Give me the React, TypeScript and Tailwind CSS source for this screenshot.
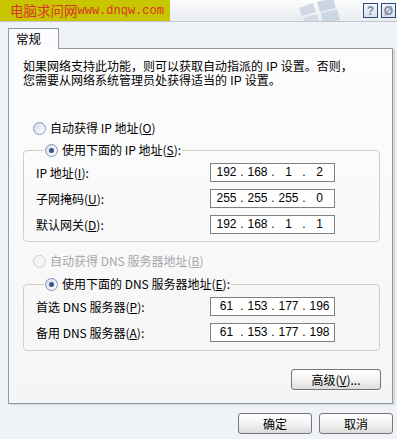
import React from 'react';

const cjk = "font-['Noto_Sans_CJK_SC','Noto_Sans',sans-serif]";

const Radio: React.FC<{ checked?: boolean; disabled?: boolean }> = ({ checked = false, disabled = false }) => (
    <span
        className={
            'inline-flex h-[13px] w-[13px] shrink-0 items-center justify-center rounded-full border ' +
            (disabled
                ? 'border-[#c9ced6] bg-[#f4f5f7]'
                : 'border-[#7d97b8] bg-gradient-to-br from-[#d4dce8] to-[#ffffff]')
        }
    >
        {checked && <span className="h-[5px] w-[5px] rounded-full bg-[#34557f]" />}
    </span>
);

const IpBox: React.FC<{ parts: string[] }> = ({ parts }) => (
    <div className="flex h-[19px] w-[125px] items-center border border-[#7f7f7f] bg-white pl-[2px] font-['Liberation_Sans',sans-serif] text-[12px] text-black">
        {parts.map((p, i) => (
            <React.Fragment key={i}>
                <span className="w-[27px] text-center leading-[17px]">{p}</span>
                {i < 3 && <span className="w-[4px] text-center leading-[17px]">.</span>}
            </React.Fragment>
        ))}
    </div>
);

const Row: React.FC<{ label: React.ReactNode; parts: string[] }> = ({ label, parts }) => (
    <div className="flex h-[19px] items-center">
        <div className="w-[174px] whitespace-nowrap">{label}</div>
        <IpBox parts={parts} />
    </div>
);

const Button: React.FC<{ className?: string; children: React.ReactNode }> = ({ className = '', children }) => (
    <button
        className={
            'flex items-center justify-center rounded-[3px] border border-[#767676] bg-gradient-to-b from-[#ffffff] via-[#f3f3f3] to-[#dcdcdc] text-[12px] text-black ' +
            className
        }
    >
        {children}
    </button>
);

export default function App() {
    return (
        <div className={`flex h-[439px] w-[397px] flex-col overflow-hidden bg-[#eff2f7] text-[12px] text-black ${cjk}`}>
            {/* title bar */}
            <div className="flex h-[22px] shrink-0 border-b border-[#c3c7cc] bg-gradient-to-b from-[#fbfcfd] to-[#e9ecf0]">
                <div className="flex h-[21px] w-[170px] items-center bg-[#c8c600] pl-[10px] text-[#d8352a]">
                    <span className="text-[13.5px] leading-none">电脑求问网</span>
                    <span className="font-['Liberation_Mono',monospace] text-[12px] leading-none">www.dnqw.com</span>
                </div>
                <div className="flex flex-1 items-start justify-end">
                    <svg width="50" height="21" viewBox="0 0 50 21" className="mr-[18px] opacity-35">
                        <path d="M4 8 L18 3 L21 12 L7 16 Z" fill="#8ea5c2" />
                        <path d="M22 2 L38 -2 L41 8 L25 12 Z" fill="#7d96b6" />
                        <path d="M8 18 L22 14 L24 22 L10 24 Z" fill="#a7b8cf" />
                        <path d="M26 13 L42 9 L45 20 L28 23 Z" fill="#91a8c5" />
                    </svg>
                    <div className="mt-[3px] flex gap-[3px] pr-[1px]">
                        <div className="flex h-[15px] w-[15px] items-center justify-center border border-[#2f4c78] bg-gradient-to-b from-[#f4f7fb] to-[#d7e0ec] font-['Liberation_Sans',sans-serif] text-[12px] font-bold leading-none text-[#7d8da4]">
                            ?
                        </div>
                        <div className="flex h-[15px] w-[15px] items-center justify-center border border-[#2f4c78] bg-gradient-to-b from-[#f4f7fb] to-[#d7e0ec] font-['Liberation_Sans',sans-serif] text-[12px] font-bold leading-none text-[#7d8da4]">
                            Ø
                        </div>
                    </div>
                </div>
            </div>

            {/* tab + panel */}
            <div className="flex flex-col pl-[8px] pr-[4px] pt-[6px]">
                <div className="flex">
                    <div className="relative z-10 -mb-px flex h-[21px] w-[51px] items-center border border-b-0 border-[#919b9c] bg-[#fcfcfe] pl-[7px] text-[12.5px]">
                        常规
                    </div>
                </div>
                <div className="flex h-[356px] flex-col border border-[#919b9c] bg-gradient-to-b from-[#fdfdfe] to-[#f5f5f5] pl-[14px] pr-[12px] pt-[11px] shadow-[2px_1px_0_#d3d6da]">
                    <div className="flex flex-col font-['Liberation_Sans','Noto_Sans_CJK_SC',sans-serif]">
                        <span className="h-[14px] whitespace-nowrap leading-[14px]">
                            如果网络支持此功能，则可以获取自动指派的 IP 设置。否则，
                        </span>
                        <span className="h-[14px] whitespace-nowrap leading-[14px]">
                            您需要从网络系统管理员处获得适当的 IP 设置。
                        </span>
                    </div>

                    <div className="mt-[32px] flex h-[16px] items-center gap-[4px] pl-[10px]">
                        <Radio />
                        <span>
                            自动获得 IP 地址(<u>O</u>)
                        </span>
                    </div>

                    <fieldset className="mt-[6px] rounded-[4px] border border-[#d0d0bf] pb-[7px] pl-[12px]">
                        <legend className="ml-[8px] flex h-[16px] items-center gap-[4px] px-[1px]">
                            <Radio checked />
                            <span>
                                使用下面的 IP 地址(<u>S</u>):
                            </span>
                        </legend>
                        <div className="flex flex-col gap-[7px] pt-[5px]">
                            <Row label={<>IP 地址(<u>I</u>):</>} parts={['192', '168', '1', '2']} />
                            <Row label={<>子网掩码(<u>U</u>):</>} parts={['255', '255', '255', '0']} />
                            <Row label={<>默认网关(<u>D</u>):</>} parts={['192', '168', '1', '1']} />
                        </div>
                    </fieldset>

                    <div className="mt-[11px] flex h-[16px] items-center gap-[4px] pl-[10px] text-[#a7a6aa]">
                        <Radio disabled />
                        <span>
                            自动获得 DNS 服务器地址(<u>B</u>)
                        </span>
                    </div>

                    <fieldset className="mt-[7px] rounded-[4px] border border-[#d0d0bf] pb-[8px] pl-[12px]">
                        <legend className="ml-[8px] flex h-[16px] items-center gap-[4px] px-[1px]">
                            <Radio checked />
                            <span>
                                使用下面的 DNS 服务器地址(<u>E</u>):
                            </span>
                        </legend>
                        <div className="flex flex-col gap-[7px] pt-[5px]">
                            <Row label={<>首选 DNS 服务器(<u>P</u>):</>} parts={['61', '153', '177', '196']} />
                            <Row label={<>备用 DNS 服务器(<u>A</u>):</>} parts={['61', '153', '177', '198']} />
                        </div>
                    </fieldset>

                    <div className="mt-[18px] flex justify-end">
                        <Button className="-mr-px h-[21px] w-[90px]">
                            高级(<u>V</u>)...
                        </Button>
                    </div>
                </div>
            </div>

            {/* bottom buttons */}
            <div className="mt-[9px] flex justify-end gap-[7px] pr-[4px]">
                <Button className="h-[21px] w-[74px]">确定</Button>
                <Button className="h-[21px] w-[74px]">取消</Button>
            </div>
        </div>
    );
}
